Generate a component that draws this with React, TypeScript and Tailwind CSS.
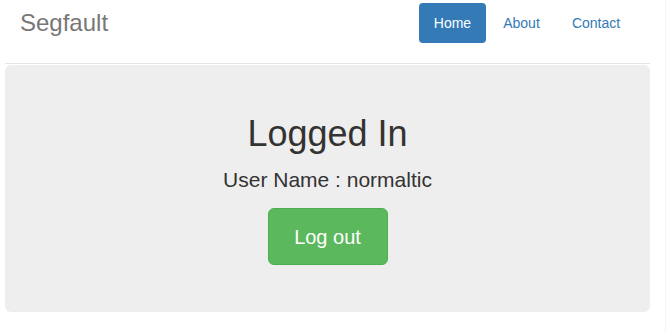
import React from "react";

export default function App() {
  return (
    <div
      className="w-[666px] h-[332px] bg-white text-[#333] overflow-hidden border-r border-[#f4f4f4]"
      style={{ fontFamily: '"Liberation Sans", Arial, sans-serif' }}
    >
      <div className="flex items-center h-[46px] pt-[3px] pl-[20px] pr-[30px]">
        <div className="text-[24px] text-[#777] leading-none -mt-[4px]">Segfault</div>
        <div className="ml-auto flex gap-[2px] self-start text-[14px]">
          <div className="w-[67px] h-[40px] flex items-center justify-center rounded-[4px] bg-[#337ab7] text-white">
            Home
          </div>
          <div className="w-[67px] h-[40px] flex items-center justify-center text-[#337ab7]">About</div>
          <div className="w-[78px] h-[40px] flex items-center justify-center text-[#337ab7]">Contact</div>
        </div>
      </div>
      <div className="mx-[5px] w-[645px] mt-[17px] border-t border-[#e5e5e5]" />
      <div className="mx-[5px] w-[645px] mt-[1px] h-[247px] bg-[#eeeeee] rounded-[6px] flex flex-col items-center">
        <div className="text-[36px] leading-none mt-[51px]">Logged In</div>
        <div className="text-[21px] leading-none mt-[17px]">User Name : normaltic</div>
        <div className="mt-[18px] w-[120px] h-[57px] rounded-[6px] bg-[#5cb85c] border border-[#4cae4c] text-white text-[20px] flex items-center justify-center">
          Log out
        </div>
      </div>
    </div>
  );
}
